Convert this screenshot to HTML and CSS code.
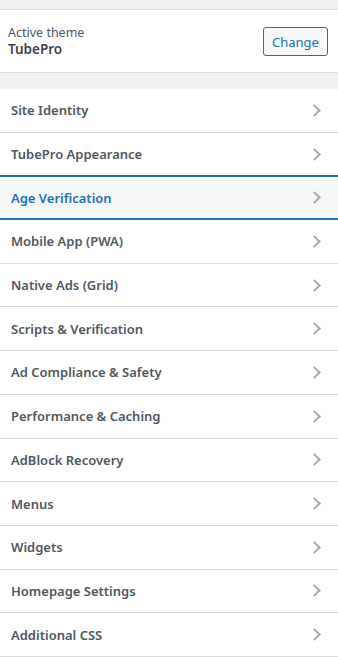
FILE: index.html
```html
<!DOCTYPE html>
<html lang="en">
<head>
    <meta charset="UTF-8">
    <meta name="viewport" content="width=device-width, initial-scale=1.0">
    <title>Customize</title>
    <link rel="stylesheet" href="styles.css">
</head>
<body>
<div class="sidebar">
    <!-- 当前主题 -->
    <div class="theme-info">
        <div class="theme-name">
            <span class="theme-label">Active theme</span>
            <strong>TubePro</strong>
        </div>
        <button class="btn-change" type="button">Change</button>
    </div>

    <!-- 面板列表 -->
    <ul class="panels">
        <li><a href="#">Site Identity<i class="arrow"></i></a></li>
        <li><a href="#">TubePro Appearance<i class="arrow"></i></a></li>
        <li class="focus"><a href="#">Age Verification<i class="arrow"></i></a></li>
        <li><a href="#">Mobile App (PWA)<i class="arrow"></i></a></li>
        <li><a href="#">Native Ads (Grid)<i class="arrow"></i></a></li>
        <li><a href="#">Scripts &amp; Verification<i class="arrow"></i></a></li>
        <li><a href="#">Ad Compliance &amp; Safety<i class="arrow"></i></a></li>
        <li><a href="#">Performance &amp; Caching<i class="arrow"></i></a></li>
        <li><a href="#">AdBlock Recovery<i class="arrow"></i></a></li>
        <li><a href="#">Menus<i class="arrow"></i></a></li>
        <li><a href="#">Widgets<i class="arrow"></i></a></li>
        <li><a href="#">Homepage Settings<i class="arrow"></i></a></li>
        <li><a href="#">Additional CSS<i class="arrow"></i></a></li>
    </ul>
</div>
</body>
</html>
```

FILE: styles.css
```css
*{
    margin: 0;
    padding: 0;
    box-sizing: border-box;
}
body{
    font-family: "Noto Sans", "Open Sans", sans-serif;
    font-size: 13px;
    color: #50575e;
    background: #f0f0f1;
}
ul{
    list-style: none;
}
a{
    text-decoration: none;
}

.sidebar{
    width: 338px;
    padding-top: 9px;
}

/*当前主题*/
.theme-info{
    display: flex;
    align-items: center;
    justify-content: space-between;
    height: 64px;
    padding: 0 10px 0 8px;
    background: #fff;
    border-top: 1px solid #dcdcde;
    border-bottom: 1px solid #dcdcde;
    margin-bottom: 16px;
}
.theme-name{
    display: flex;
    flex-direction: column;
    line-height: 17px;
}
.theme-label{
    font-size: 12.5px;
}
.theme-name strong{
    font-size: 13.5px;
    font-weight: 600;
    color: #3c434a;
}
.btn-change{
    width: 65px;
    height: 29px;
    margin-top: 1px;
    font-family: inherit;
    font-size: 13px;
    color: #2271b1;
    background: #f6f7f7;
    border: 1px solid #2271b1;
    border-radius: 3px;
}

/*面板列表*/
.panels li{
    background: #fff;
    border-bottom: 1px solid #dcdcde;
}
.panels li a{
    display: flex;
    align-items: center;
    justify-content: space-between;
    height: 42.7px;
    padding: 0 19px 0 11px;
    font-size: 13px;
    font-weight: 600;
    color: #50575e;
}
.panels li.focus{
    background: #f6f7f7;
    border-bottom-color: #2271b1;
    box-shadow: 0 -1px 0 #2271b1, inset 0 1px 0 #2271b1, inset 0 -1px 0 #2271b1;
}
.panels li.focus a{
    color: #2271b1;
}
.arrow{
    width: 9px;
    height: 9px;
    border-top: 2px solid #a7aaad;
    border-right: 2px solid #a7aaad;
    transform: rotate(45deg);
}
```
